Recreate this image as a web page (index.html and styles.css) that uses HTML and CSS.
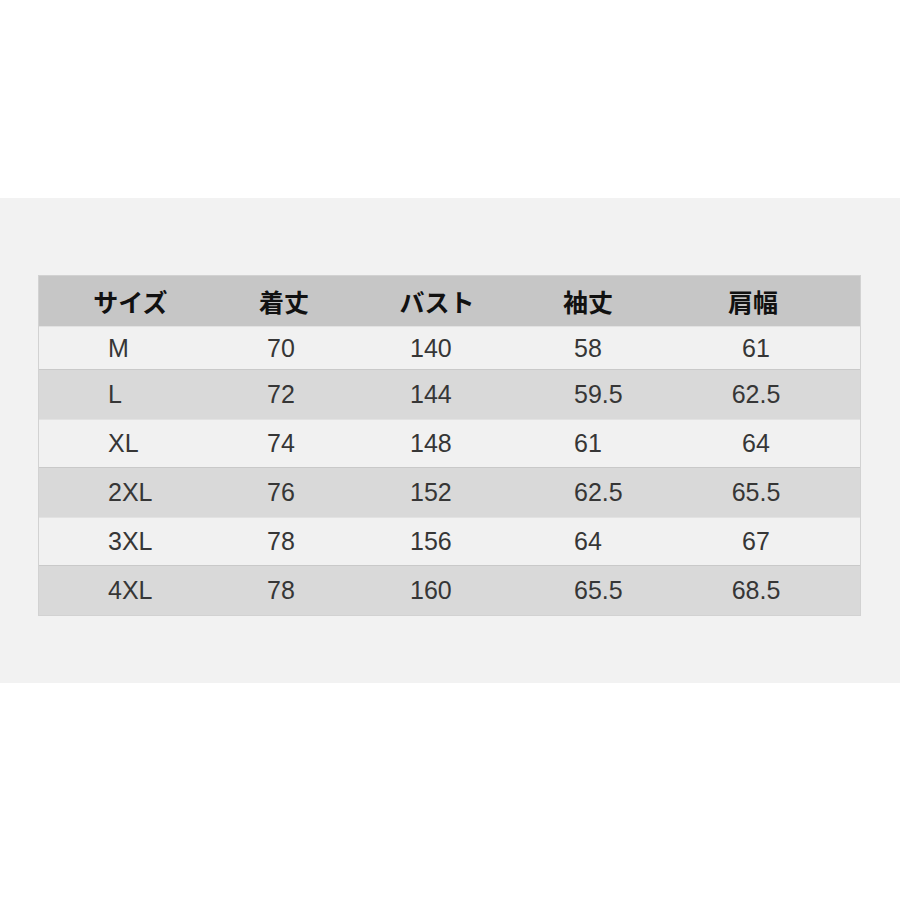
FILE: index.html
```html
<!DOCTYPE html>
<html lang="ja">
<head>
<meta charset="utf-8">
<title>サイズ表</title>
<link rel="stylesheet" href="styles.css">
</head>
<body>
<div class="band">
  <div class="table">
    <div class="row head">
      <div class="cell c1">サイズ</div>
      <div class="cell c2">着丈</div>
      <div class="cell c3">バスト</div>
      <div class="cell c4">袖丈</div>
      <div class="cell c5">肩幅</div>
    </div>
    <div class="row light first">
      <div class="cell c1">M</div><div class="cell c2">70</div><div class="cell c3">140</div><div class="cell c4">58</div><div class="cell c5">61</div>
    </div>
    <div class="row dark">
      <div class="cell c1">L</div><div class="cell c2">72</div><div class="cell c3">144</div><div class="cell c4">59.5</div><div class="cell c5">62.5</div>
    </div>
    <div class="row light">
      <div class="cell c1">XL</div><div class="cell c2">74</div><div class="cell c3">148</div><div class="cell c4">61</div><div class="cell c5">64</div>
    </div>
    <div class="row dark">
      <div class="cell c1">2XL</div><div class="cell c2">76</div><div class="cell c3">152</div><div class="cell c4">62.5</div><div class="cell c5">65.5</div>
    </div>
    <div class="row light">
      <div class="cell c1">3XL</div><div class="cell c2">78</div><div class="cell c3">156</div><div class="cell c4">64</div><div class="cell c5">67</div>
    </div>
    <div class="row dark">
      <div class="cell c1">4XL</div><div class="cell c2">78</div><div class="cell c3">160</div><div class="cell c4">65.5</div><div class="cell c5">68.5</div>
    </div>
  </div>
</div>
</body>
</html>
```
FILE: styles.css
```css
html, body {
  margin: 0;
  padding: 0;
  background: #ffffff;
}
body {
  width: 900px;
  height: 900px;
  overflow: hidden;
}
.band {
  margin-top: 198px;
  height: 485px;
  background: #f2f2f2;
  padding-top: 77px;
  padding-left: 38px;
  box-sizing: border-box;
}
.table {
  width: 823px;
  border: 1px solid #d2d2d2;
  box-sizing: border-box;
}
.row {
  display: grid;
  grid-template-columns: 168px 154px 152px 157px 190px;
  align-items: center;
  height: 48px;
  font-family: "Liberation Sans", Arial, sans-serif;
  font-size: 25px;
  color: #363636;
}
.row.head {
  height: 50px;
  background: #c6c6c6;
  font-family: "Noto Sans CJK JP", "Noto Sans", sans-serif;
  font-weight: 700;
  color: #111111;
}
.row.light {
  background: #f1f1f1;
  border-top: 1px solid #e2e2e2;
  height: 47px;
}
.row.light.first {
  height: 42px;
}
.row.dark {
  background: #d9d9d9;
  border-top: 1px solid #c9c9c9;
  height: 49px;
}
.cell {
  white-space: nowrap;
  line-height: 1;
}
.head .cell {
  text-align: center;
}
.head .c1 { padding-left: 15px; }
.head .c4 { padding-right: 7px; }
.head .c5 { padding-right: 24px; }

.light .c1, .dark .c1 { padding-left: 69px; }
.light .c2, .dark .c2 { padding-left: 60px; }
.light .c3, .dark .c3 { padding-left: 49px; }
.light .c4, .dark .c4 { padding-left: 61px; }
.light .c5, .dark .c5 { text-align: center; padding-right: 18px; }
```
